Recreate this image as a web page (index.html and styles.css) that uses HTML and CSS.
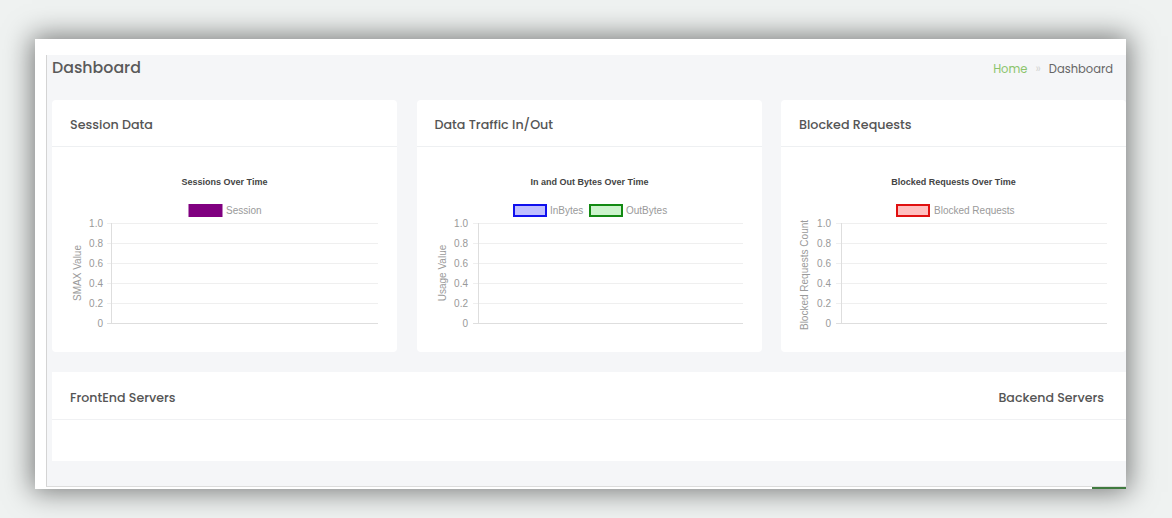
FILE: index.html
```html
<!DOCTYPE html>
<html lang="en">
<head>
    <meta charset="UTF-8">
    <title>Dashboard</title>
    <link rel="stylesheet" href="styles.css">
</head>
<body>
    <div class="shot">
        <div class="page">
            <div class="page-head">
                <h1>Dashboard</h1>
                <div class="crumbs">
                    <span class="crumb-home">Home</span>
                    <span class="crumb-sep">&raquo;</span>
                    <span class="crumb-current">Dashboard</span>
                </div>
            </div>

            <div class="cards">
                <div class="card">
                    <div class="card-head">Session Data</div>
                    <svg class="chart" width="345" height="205" viewBox="0 0 345 205">
                        <text class="c-title" x="172.5" y="38" text-anchor="middle">Sessions Over Time</text>
                        <rect x="137" y="57.5" width="33" height="12" fill="#800080" stroke="#800080" stroke-width="1"/>
                        <text class="c-label" x="174" y="67">Session</text>
                        <g class="grid">
                            <line x1="55" y1="76.5" x2="326" y2="76.5"/>
                            <line x1="55" y1="96.5" x2="326" y2="96.5"/>
                            <line x1="55" y1="116.5" x2="326" y2="116.5"/>
                            <line x1="55" y1="136.5" x2="326" y2="136.5"/>
                            <line x1="55" y1="156.5" x2="326" y2="156.5"/>
                            <line class="axis" x1="55" y1="176.5" x2="326" y2="176.5"/>
                            <line class="axis" x1="59.5" y1="76" x2="59.5" y2="177"/>
                        </g>
                        <g class="ticks">
                            <text x="51" y="80">1.0</text>
                            <text x="51" y="100">0.8</text>
                            <text x="51" y="120">0.6</text>
                            <text x="51" y="140">0.4</text>
                            <text x="51" y="160">0.2</text>
                            <text x="51" y="180">0</text>
                        </g>
                        <text class="c-label" transform="translate(29 126) rotate(-90)" text-anchor="middle">SMAX Value</text>
                    </svg>
                </div>

                <div class="card">
                    <div class="card-head">Data Traffic In/Out</div>
                    <svg class="chart" width="345" height="205" viewBox="0 0 345 205">
                        <text class="c-title" x="172.5" y="38" text-anchor="middle">In and Out Bytes Over Time</text>
                        <rect x="97" y="58" width="32" height="11" fill="rgba(0,0,255,0.25)" stroke="#1010ee" stroke-width="2"/>
                        <text class="c-label" x="133" y="67">InBytes</text>
                        <rect x="173" y="58" width="32" height="11" fill="rgba(0,200,0,0.2)" stroke="#138a13" stroke-width="2"/>
                        <text class="c-label" x="209" y="67">OutBytes</text>
                        <g class="grid">
                            <line x1="56" y1="76.5" x2="326" y2="76.5"/>
                            <line x1="56" y1="96.5" x2="326" y2="96.5"/>
                            <line x1="56" y1="116.5" x2="326" y2="116.5"/>
                            <line x1="56" y1="136.5" x2="326" y2="136.5"/>
                            <line x1="56" y1="156.5" x2="326" y2="156.5"/>
                            <line class="axis" x1="56" y1="176.5" x2="326" y2="176.5"/>
                            <line class="axis" x1="61.5" y1="76" x2="61.5" y2="177"/>
                        </g>
                        <g class="ticks">
                            <text x="51" y="80">1.0</text>
                            <text x="51" y="100">0.8</text>
                            <text x="51" y="120">0.6</text>
                            <text x="51" y="140">0.4</text>
                            <text x="51" y="160">0.2</text>
                            <text x="51" y="180">0</text>
                        </g>
                        <text class="c-label" transform="translate(29 126) rotate(-90)" text-anchor="middle">Usage Value</text>
                    </svg>
                </div>

                <div class="card">
                    <div class="card-head">Blocked Requests</div>
                    <svg class="chart" width="345" height="205" viewBox="0 0 345 205">
                        <text class="c-title" x="172.5" y="38" text-anchor="middle">Blocked Requests Over Time</text>
                        <rect x="116" y="58" width="32" height="11" fill="rgba(255,0,0,0.25)" stroke="#e01010" stroke-width="2"/>
                        <text class="c-label" x="153" y="67">Blocked Requests</text>
                        <g class="grid">
                            <line x1="55" y1="76.5" x2="326" y2="76.5"/>
                            <line x1="55" y1="96.5" x2="326" y2="96.5"/>
                            <line x1="55" y1="116.5" x2="326" y2="116.5"/>
                            <line x1="55" y1="136.5" x2="326" y2="136.5"/>
                            <line x1="55" y1="156.5" x2="326" y2="156.5"/>
                            <line class="axis" x1="55" y1="176.5" x2="326" y2="176.5"/>
                            <line class="axis" x1="60.5" y1="76" x2="60.5" y2="177"/>
                        </g>
                        <g class="ticks">
                            <text x="50" y="80">1.0</text>
                            <text x="50" y="100">0.8</text>
                            <text x="50" y="120">0.6</text>
                            <text x="50" y="140">0.4</text>
                            <text x="50" y="160">0.2</text>
                            <text x="50" y="180">0</text>
                        </g>
                        <text class="c-label" transform="translate(27 128) rotate(-90)" text-anchor="middle">Blocked Requests Count</text>
                    </svg>
                </div>
            </div>

            <div class="servers">
                <div class="servers-head">
                    <span>FrontEnd Servers</span>
                    <span>Backend Servers</span>
                </div>
                <div class="servers-body"></div>
            </div>
        </div>
        <div class="shot-foot">
            <span class="foot-bar"></span>
        </div>
    </div>
</body>
</html>
```

FILE: styles.css
```css
html, body { margin: 0; height: 100%; }
body { background-color: #eff2f1; font-family: "Poppins", "Open Sans", sans-serif; overflow: hidden; }

.shot { margin: 39px 0 0 35px; width: 1091px; height: 450px; background: #fff; padding: 16px 0 0 11px; box-sizing: border-box; box-shadow: 0 0 26px 3px rgba(0,0,0,0.5); display: flex; flex-direction: column; }
.page { flex: 1; background: #f5f6f8; border-left: 1px solid #d4d4d4; border-bottom: 1px solid #dcdcdc; padding-left: 5px; display: flex; flex-direction: column; overflow: hidden; }

.page-head { height: 45px; display: flex; align-items: flex-start; justify-content: space-between; padding-right: 13px; box-sizing: border-box; }
.page-head h1 { margin: 1px 0 0; font-size: 15.8px; line-height: 24px; font-weight: 500; color: #5a5a5a; }
.crumbs { font-size: 11.5px; line-height: 18px; color: #666; display: flex; gap: 8px; margin-top: 5px; }
.crumb-home { color: #8cc46c; }
.crumb-sep { color: #d6d6d6; }

.cards { display: grid; grid-template-columns: 345px 345px 345px; column-gap: 19.5px; }
.card { background: #fff; border-radius: 4px; height: 252px; }
.card-head { height: 46px; line-height: 50px; padding-left: 18px; border-bottom: 1px solid #eef0f2; font-size: 12.7px; font-weight: 500; color: #555; }
.chart { display: block; font-family: "Liberation Sans", Arial, sans-serif; }
.c-title { font-size: 9px; font-weight: bold; fill: #444; }
.c-label { font-size: 10px; fill: #9a9a9a; }
.ticks text { font-size: 10px; fill: #999; text-anchor: end; }
.grid line { stroke: #efefef; stroke-width: 1; }
.grid line.axis { stroke: #dedede; }

.servers { margin-top: 20px; background: #fff; }
.servers-head { height: 48px; display: flex; align-items: center; justify-content: space-between; padding: 4px 22px 0 18px; box-sizing: border-box; border-bottom: 1px solid #f0f1f3; font-size: 12.6px; font-weight: 500; color: #555; }
.servers-body { height: 41px; }

.shot-foot { height: 2px; display: flex; justify-content: flex-end; }
.foot-bar { width: 34px; background: #3f7a3f; }
```
